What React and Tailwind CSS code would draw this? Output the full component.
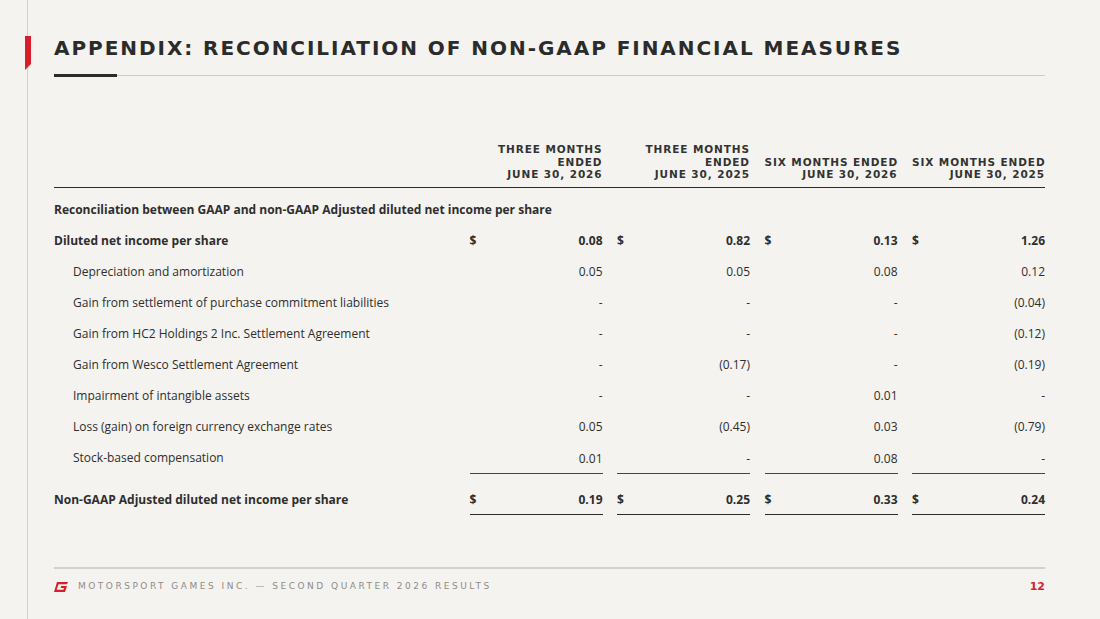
const body = { fontFamily: '"Open Sans", "Liberation Sans", sans-serif' };
const display = { fontFamily: '"DejaVu Sans", "Liberation Sans", sans-serif' };

const rows = [
  { label: "Depreciation and amortization", v: ["0.05", "0.05", "0.08", "0.12"] },
  { label: "Gain from settlement of purchase commitment liabilities", v: ["-", "-", "-", "(0.04)"] },
  { label: "Gain from HC2 Holdings 2 Inc. Settlement Agreement", v: ["-", "-", "-", "(0.12)"] },
  { label: "Gain from Wesco Settlement Agreement", v: ["-", "(0.17)", "-", "(0.19)"] },
  { label: "Impairment of intangible assets", v: ["-", "-", "0.01", "-"] },
  { label: "Loss (gain) on foreign currency exchange rates", v: ["0.05", "(0.45)", "0.03", "(0.79)"] },
  { label: "Stock-based compensation", v: ["0.01", "-", "0.08", "-"] },
];

const heads = [
  ["THREE MONTHS", "ENDED", "JUNE 30, 2026"],
  ["THREE MONTHS", "ENDED", "JUNE 30, 2025"],
  ["SIX MONTHS ENDED", "JUNE 30, 2026"],
  ["SIX MONTHS ENDED", "JUNE 30, 2025"],
];

const grid = "grid grid-cols-[1fr_133px_133px_133px_133px] gap-x-[14.5px]";

function Money({ v, bold }) {
  return (
    <div className={`flex justify-between items-center ${bold ? "font-bold" : ""}`}>
      <span>$</span>
      <span>{v}</span>
    </div>
  );
}

function Logo() {
  return (
    <svg width="14" height="10" viewBox="0 0 14 10">
      <path d="M3 0 H14 L13 2.2 H4.6 L2.6 7.8 H9.4 L10 6 H6.5 L7.2 4 H13 L11 10 H0 Z" fill="#d81e2a" />
    </svg>
  );
}

export default function App() {
  return (
    <div className="relative w-[1100px] h-[619px] bg-[#f4f3ef] flex text-[#2e2e2e]" style={body}>
      {/* left rail */}
      <div className="w-[28px] border-r border-[#d4d1cc] shrink-0" />
      <svg className="absolute left-[25px] top-[36px]" width="7" height="34" viewBox="0 0 7 34">
        <path d="M0 0 H6 V28 L0 34 Z" fill="#d81e2a" />
      </svg>

      <div className="flex-1 pl-[26px] pr-[55px] flex flex-col">
        {/* title */}
        <h1
          className="mt-[37px] text-[20px] leading-[22px] font-bold tracking-[1.95px] text-[#2b2b2b] whitespace-nowrap"
          style={display}
        >
          APPENDIX: RECONCILIATION OF NON-GAAP FINANCIAL MEASURES
        </h1>
        <div className="mt-[15px] flex items-center">
          <div className="w-[63px] h-[3px] bg-[#2b2b2b]" />
          <div className="flex-1 h-px bg-[#cfccc6]" />
        </div>

        {/* table header */}
        <div className={`${grid} mt-[66px] pb-[6px] border-b-[1.5px] border-[#2b2b2b]`}>
          <div />
          {heads.map((h, i) => (
            <div
              key={i}
              className="flex flex-col justify-end text-right text-[10.5px] leading-[12.5px] font-bold tracking-[0.9px] text-[#333] whitespace-nowrap"
              style={display}
            >
              {h.map((t) => (
                <span key={t}>{t}</span>
              ))}
            </div>
          ))}
        </div>

        <div className="text-[12px]">
          <div className="h-[31px] mt-[7px] flex items-center font-bold">
            Reconciliation between GAAP and non-GAAP Adjusted diluted net income per share
          </div>
          <div className={`${grid} h-[31px] items-center`}>
            <div className="font-bold">Diluted net income per share</div>
            <Money v="0.08" bold />
            <Money v="0.82" bold />
            <Money v="0.13" bold />
            <Money v="1.26" bold />
          </div>
          {rows.map((r, idx) => (
            <div key={r.label} className={`${grid} h-[31px]`}>
              <div className="pl-[19px] flex items-center">{r.label}</div>
              {r.v.map((v, i) => (
                <div
                  key={i}
                  className={`flex items-center justify-end ${
                    idx === rows.length - 1 ? "border-b-[1.5px] border-[#444] pt-[2px]" : ""
                  }`}
                >
                  {v}
                </div>
              ))}
            </div>
          ))}
          <div className={`${grid} mt-[12px]`}>
            <div className="font-bold h-[29px] flex items-center">Non-GAAP Adjusted diluted net income per share</div>
            {["0.19", "0.25", "0.33", "0.24"].map((v) => (
              <div key={v} className="h-[29px] flex flex-col justify-center border-b-[1.5px] border-[#2b2b2b]">
                <Money v={v} bold />
              </div>
            ))}
          </div>
        </div>

        {/* footer */}
        <div className="mt-auto mb-[24px]">
          <div className="h-[2px] bg-[#d4d1cc]" />
          <div className="mt-[10px] flex items-center justify-between">
            <div className="flex items-center gap-[10px]">
              <Logo />
              <span className="text-[9px] tracking-[2.5px] text-[#8e8c88]" style={display}>
                MOTORSPORT GAMES INC. — SECOND QUARTER 2026 RESULTS
              </span>
            </div>
            <span className="text-[11px] font-bold text-[#d81e2a]" style={display}>
              12
            </span>
          </div>
        </div>
      </div>
    </div>
  );
}
